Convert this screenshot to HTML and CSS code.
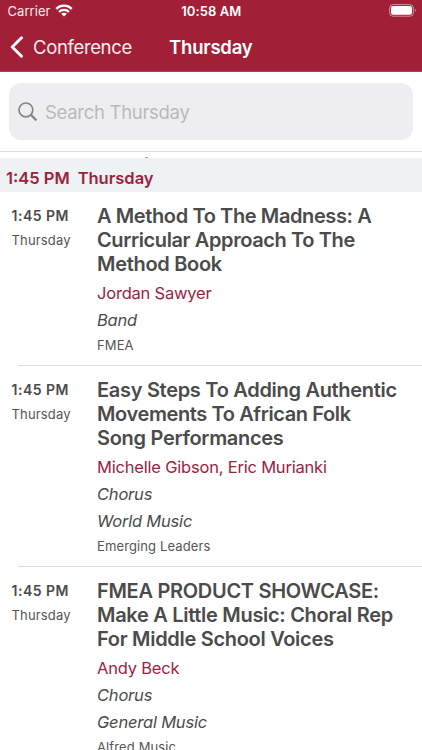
FILE: index.html
```html
<!DOCTYPE html>
<html lang="en">
<head>
<meta charset="utf-8">
<title>Thursday</title>
<link rel="stylesheet" href="styles.css">
</head>
<body>
<header class="top">
  <div class="status">
    <div class="carrier"><span class="carrier-name">Carrier</span>
      <svg class="wifi" width="18" height="13" viewBox="0 0 18 13" fill="none" stroke="#fff" stroke-width="2.3"><path d="M1.200 4.800C5.600.600 12.400.600 16.800 4.800"/><path d="M4 7.900C6.800 5.300 11.200 5.300 14 7.900"/><path d="M9 12.600L6.200 9.800C7.800 8.400 10.200 8.400 11.800 9.800Z" fill="#fff" stroke="none"/></svg>
    </div>
    <div class="clock"><span>10:58 AM</span></div>
    <svg class="battery" width="28" height="13" viewBox="0 0 28 13"><rect x=".6" y=".6" width="23.800" height="11.600" rx="3.400" fill="none" stroke="#d38e9d"/><rect x="2" y="2" width="21" height="8.800" rx="2" fill="#fff"/><path d="M25.800 4.500C27.200 5 27.200 7.800 25.800 8.300Z" fill="#d38e9d"/></svg>
  </div>
  <nav class="nav">
    <svg class="chevron" width="14" height="22" viewBox="0 0 14 22" fill="none" stroke="#fff" stroke-width="2.900" stroke-linecap="round" stroke-linejoin="round"><path d="M12.500 1.800L3.200 11L12.500 20.200"/></svg>
    <span class="back">Conference</span>
    <h1 class="heading">Thursday</h1>
  </nav>
</header>
<div class="search-wrap">
  <div class="search">
    <svg width="20" height="20" viewBox="0 0 20 20" fill="none" stroke="#858589" stroke-width="1.700"><circle cx="7.900" cy="7.900" r="6.900"/><path d="M12.900 12.900L18.400 18.400" stroke-width="2.200"/></svg>
    <span class="hint">Search Thursday</span>
  </div>
</div>
<div class="peek"><i class="peek-mark"></i></div>
<h2 class="section"><span>1:45 PM</span><span>Thursday</span></h2>
<main>
  <article class="row">
    <div class="when"><b>1:45 PM</b><span>Thursday</span></div>
    <div class="info">
      <h3 class="title"><span class="snug">A Method To The Madness: A</span><span class="snug">Curricular Approach To The</span><span>Method Book</span></h3>
      <p class="speaker">Jordan Sawyer</p>
      <p class="topic">Band</p>
      <p class="org">FMEA</p>
    </div>
  </article>
  <article class="row">
    <div class="when"><b>1:45 PM</b><span>Thursday</span></div>
    <div class="info">
      <h3 class="title"><span>Easy Steps To Adding Authentic</span><span class="snug">Movements To African Folk</span><span>Song Performances</span></h3>
      <p class="speaker">Michelle Gibson, Eric Murianki</p>
      <p class="topic">Chorus</p>
      <p class="topic">World Music</p>
      <p class="org">Emerging Leaders</p>
    </div>
  </article>
  <article class="row">
    <div class="when"><b>1:45 PM</b><span>Thursday</span></div>
    <div class="info">
      <h3 class="title"><span>FMEA PRODUCT SHOWCASE:</span><span>Make A Little Music: Choral Rep</span><span>For Middle School Voices</span></h3>
      <p class="speaker">Andy Beck</p>
      <p class="topic">Chorus</p>
      <p class="topic">General Music</p>
      <p class="org">Alfred Music</p>
    </div>
  </article>
</main>
</body>
</html>
```
FILE: styles.css
```css
* { box-sizing: border-box; margin: 0; padding: 0; }
html, body { height: 750px; overflow: hidden; }
body {
  width: 422px;
  background: #fff;
  color: #4b4b4b;
  font-family: Inter, "Liberation Sans", sans-serif;
  white-space: nowrap;
}
.top { height: 72px; background: #a21f38; color: #fff; border-bottom: 1px solid #b0455a; }
.status { height: 23px; display: grid; grid-template-columns: 1fr auto 1fr; align-items: center; padding: 0 5px 0 7.500px; }
.carrier { display: flex; align-items: center; gap: 5px; margin-top: -1px; font-size: 13px; letter-spacing: .05px; color: #f8e9ec; }
.wifi { margin-top: -1px; }
.clock { margin: -1px 2px 0 0; font-size: 13px; font-weight: 600; letter-spacing: .1px; }
.battery { justify-self: end; margin-top: -2px; }
.nav { height: 48px; display: flex; align-items: center; padding-left: 8.500px; }
.back { margin-left: 10.500px; width: 136px; font-size: 18.500px; letter-spacing: -.35px; color: #fbeef0; }
.heading { font-size: 18.500px; font-weight: 600; letter-spacing: -.2px; }
.search-wrap { height: 80px; padding: 11px 9px 0; border-bottom: 1px solid #dedee0; }
.search { height: 57px; border-radius: 12px; background: #eeeef0; display: flex; align-items: center; padding-left: 9px; gap: 7px; }
.hint { font-size: 18.500px; letter-spacing: -.3px; color: #b9b9bc; }
.peek { height: 6px; display: flex; align-items: flex-end; padding-left: 145px; }
.peek-mark { width: 3px; height: 1px; background: #a8a8a8; }
.section { height: 34px; background: #eef2f3; display: flex; align-items: center; gap: 8px; padding: 5px 6px 0; font-size: 16.500px; font-weight: 600; color: #9c2340; }
.row { display: flex; padding: 12px 0 8.500px 11.500px; position: relative; }
.row + .row { padding-top: 13px; }
.row + .row::before { content: ""; position: absolute; top: 0; left: 18px; right: 0; height: 1px; background: #dcdcdc; }
.when { width: 85.500px; display: flex; flex-direction: column; }
.when b { font-size: 14px; font-weight: 600; line-height: 24px; letter-spacing: .5px; }
.when span { font-size: 13px; line-height: 24px; letter-spacing: .15px; color: #555; }
.title { font-size: 20px; font-weight: 600; line-height: 24px; letter-spacing: -.300px; margin-bottom: 4.200px; }
.title span { display: block; width: max-content; }
.title .snug { letter-spacing: -.390px; }
.speaker, .topic { font-size: 16.500px; line-height: 27px; letter-spacing: -.2px; }
.speaker { color: #9c2340; }
.topic { font-style: italic; }
.org { margin-top: .700px; font-size: 13px; line-height: 21.500px; letter-spacing: .12px; color: #555; }
```
